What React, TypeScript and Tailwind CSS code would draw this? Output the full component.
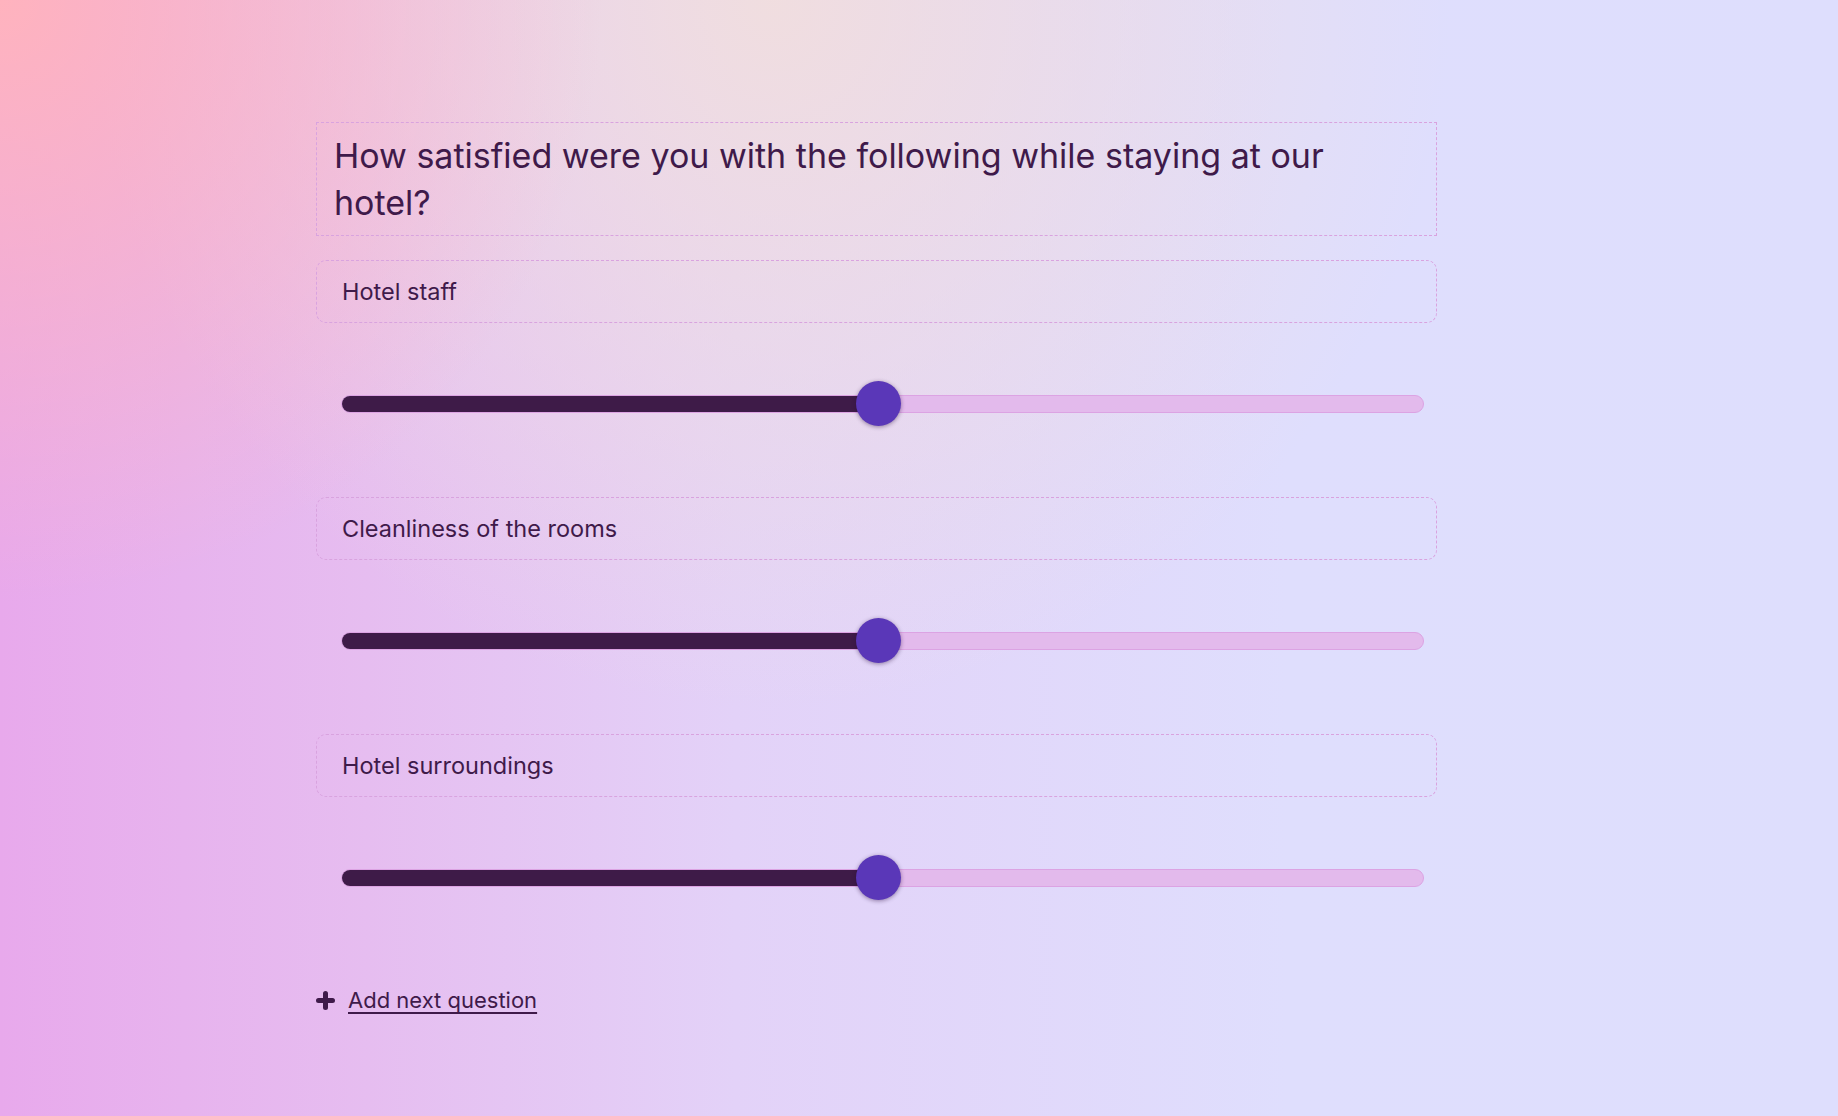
import React from "react";

const items = ["Hotel staff", "Cleanliness of the rooms", "Hotel surroundings"];

const Slider: React.FC = () => (
  <div className="relative ml-[25px] mr-[13px] flex h-[45px] items-center">
    <div className="flex h-[18px] w-full overflow-hidden rounded-full border border-[#dca3e3] bg-[#e3baec]">
      <div className="h-full w-[calc(50%-5px)] bg-[#3e1b48]" />
    </div>
    <div className="absolute left-[calc(50%-27px)] top-0 h-[45px] w-[45px] rounded-full bg-[#5a37b8] shadow-[0_1px_4px_rgba(40,10,60,0.45)]" />
  </div>
);

const App: React.FC = () => {
  return (
    <div className="min-h-screen w-full bg-[#dedefd] bg-[image:radial-gradient(circle_at_0%_0%,#ffb3be_0%,rgba(255,179,190,0)_28%),radial-gradient(ellipse_at_42%_0%,rgba(241,222,222,0.95)_0%,rgba(241,222,222,0)_45%),linear-gradient(to_right,#e8a9ec_0%,#e6bdf0_20%,#e3d2f8_40%,#dfdefd_70%,#dedefd_100%)] pl-[316px] pt-[122px] font-['Inter',sans-serif] text-[#3f1a4a]">
      <div className="w-[1121px]">
        <div className="border border-dashed border-[#d9a3df] py-[9px] pl-[17px] pr-6 text-[34px] leading-[47px]">
          How satisfied were you with the following while staying at our hotel?
        </div>

        <div className="mt-6">
          {items.map((label) => (
            <div key={label}>
              <div className="flex h-[63px] items-center rounded-[10px] border border-dashed border-[#d9a3df] pl-[25px] text-[23.5px]">
                {label}
              </div>
              <div className="pb-[71px] pt-[58px]">
                <Slider />
              </div>
            </div>
          ))}
        </div>

        <div className="mt-[13px] flex items-center gap-[13px]">
          <svg width="19" height="19" viewBox="0 0 19 19" className="shrink-0">
            <path d="M9.5 2.5v14M2.5 9.5h14" stroke="#3f1a4a" strokeWidth="5" strokeLinecap="round" />
          </svg>
          <a href="#" className="text-[22px] underline underline-offset-4">
            Add next question
          </a>
        </div>
      </div>
    </div>
  );
};

export default App;
